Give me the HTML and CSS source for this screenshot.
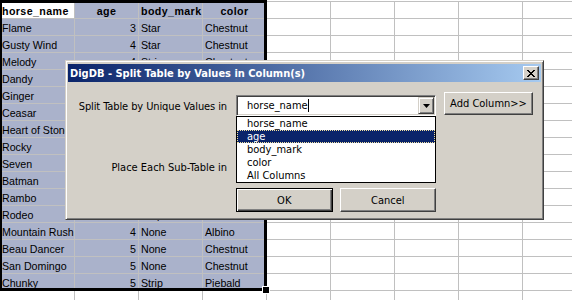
FILE: index.html
```html
<!DOCTYPE html>
<html lang="en">
<head>
  <meta charset="UTF-8">
  <title>DigDB - Split Table</title>
  <link rel="stylesheet" href="styles.css">
</head>
<body>
  <!-- Worksheet -->
  <div class="sheet" id="sheet"></div>
  <div class="selection"></div>
  <div class="fill-handle"></div>

  <!-- Dialog -->
  <div class="dialog">
    <div class="title-bar">
      <span>DigDB - Split Table by Values in Column(s)</span>
      <div class="close">
        <svg width="8" height="7" viewBox="0 0 8 7"><path d="M0 0h2v1h-2zM6 0h2v1h-2zM1 1h2v1h-2zM5 1h2v1h-2zM2 2h4v1h-4zM3 3h2v1h-2zM2 4h4v1h-4zM1 5h2v1h-2zM5 5h2v1h-2zM0 6h2v1h-2zM6 6h2v1h-2z" fill="#000"/></svg>
      </div>
    </div>

    <div class="form">
      <div class="label first">Split Table by Unique Values in</div>
      <div class="combo first">
        <span>horse_name</span><span class="caret"></span>
        <div class="combo-btn"><svg width="7" height="4" viewBox="0 0 7 4"><path d="M0 0h7l-3.5 4z" fill="#000"/></svg></div>
        <div class="list">
          <div class="item">horse_name</div>
          <div class="item active">age</div>
          <div class="item">body_mark</div>
          <div class="item">color</div>
          <div class="item">All Columns</div>
        </div>
      </div>
      <button class="btn add">Add Column&gt;&gt;</button>

      <div class="label second">Place Each Sub-Table in</div>
      <div class="combo second"></div>

      <div class="actions">
        <button class="btn default">OK</button>
        <button class="btn">Cancel</button>
      </div>
    </div>
  </div>

  <script>
    const sheet = document.getElementById('sheet');
    const horses = [
      ['Flame', 3, 'Star', 'Chestnut'],
      ['Gusty Wind', 4, 'Star', 'Chestnut'],
      ['Melody', 4, 'Strip', 'Chestnut'],
      ['Dandy', 3, 'Blaze', 'Bay'],
      ['Ginger', 2, 'Star', 'Chestnut'],
      ['Ceasar', 6, 'Blaze', 'Grey'],
      ['Heart of Stone', 5, 'None', 'Black'],
      ['Rocky', 4, 'Snip', 'Bay'],
      ['Seven', 7, 'Star', 'Dun'],
      ['Batman', 5, 'None', 'Black'],
      ['Rambo', 6, 'Blaze', 'Bay'],
      ['Rodeo', 3, 'Strip', 'Palomino'],
      ['Mountain Rush', 4, 'None', 'Albino'],
      ['Beau Dancer', 5, 'None', 'Chestnut'],
      ['San Domingo', 5, 'None', 'Chestnut'],
      ['Chunky', 5, 'Strip', 'Piebald']
    ];

    function addCell(text, classes) {
      const cell = document.createElement('div');
      cell.className = 'cell ' + classes;
      cell.textContent = text;
      sheet.appendChild(cell);
    }

    function addEmpty(count) {
      for (let i = 0; i < count; i++) addCell('', '');
    }

    // header row, A1 is the active cell
    addCell('horse_name', 'head');
    addCell('age', 'head center sel');
    addCell('body_mark', 'head sel');
    addCell('color', 'head center sel');
    addEmpty(5);

    horses.forEach(h => {
      addCell(h[0], 'sel');
      addCell(h[1], 'num sel');
      addCell(h[2], 'sel');
      addCell(h[3], 'sel');
      addEmpty(5);
    });

    addEmpty(9);
  </script>
</body>
</html>
```

FILE: styles.css
```css
body {
  margin: 0;
  padding-top: 1px;
  height: 299px;
  overflow: hidden;
  position: relative;
  background: #fff;
  font-family: "Liberation Sans", Arial, sans-serif;
}

/* Worksheet */
.sheet {
  display: grid;
  grid-template-columns: 75px repeat(8, 64px);
  grid-auto-rows: 17px;
  border-top: 1px solid #c0c0c0;
}

.cell {
  box-sizing: border-box;
  border-right: 1px solid #c0c0c0;
  border-bottom: 1px solid #c0c0c0;
  padding: 2px 2px 0;
  font-size: 10.67px;
  line-height: 14px;
  white-space: nowrap;
  overflow: hidden;
  color: #000;
}

.cell.head {
  font-weight: bold;
  letter-spacing: 0.4px;
}

.cell.center {
  text-align: center;
}

.cell.num {
  text-align: right;
}

.cell.sel {
  background: #aab2cb;
}

.selection {
  position: absolute;
  left: 0;
  top: 0;
  width: 267px;
  height: 291px;
  box-sizing: border-box;
  border: 3px solid #000;
  border-left-width: 2px;
}

.fill-handle {
  position: absolute;
  left: 262px;
  top: 286px;
  width: 6px;
  height: 6px;
  background: #000;
  border: 1px solid #fff;
}

/* Dialog */
.dialog {
  position: absolute;
  left: 65px;
  top: 60px;
  width: 479px;
  height: 160px;
  box-sizing: border-box;
  padding: 3px 2px 2px;
  background: #d4d0c8;
  border: 1px solid;
  border-color: #d4d0c8 #404040 #404040 #d4d0c8;
  box-shadow: inset 1px 1px #fff, inset -1px -1px #808080;
  font-family: "DejaVu Sans Condensed", "Liberation Sans", sans-serif;
  font-size: 11px;
  color: #000;
}

.title-bar {
  height: 18px;
  display: flex;
  align-items: center;
  justify-content: space-between;
  padding: 0 2px;
  background: linear-gradient(to right, #0a246a, #a6caf0);
  color: #fff;
  font-weight: bold;
}

.close {
  width: 16px;
  height: 14px;
  box-sizing: border-box;
  display: flex;
  align-items: center;
  justify-content: center;
  background: #d4d0c8;
  border: 1px solid;
  border-color: #fff #404040 #404040 #fff;
  box-shadow: inset -1px -1px #808080;
}

.form {
  display: grid;
  grid-template-columns: 159px 200px 89px;
  grid-template-rows: 24px 62px 34px;
  column-gap: 9px;
  padding-top: 10px;
}

.label {
  text-align: right;
  white-space: nowrap;
}

.label.first {
  align-self: center;
  padding-top: 5px;
  letter-spacing: -0.1px;
}

.label.second {
  align-self: end;
  line-height: 21px;
}

.combo {
  position: relative;
  height: 21px;
  box-sizing: border-box;
  display: flex;
  align-items: center;
  padding-left: 10px;
  background: #fff;
  border: 1px solid;
  border-color: #808080 #fff #fff #808080;
  box-shadow: inset 1px 1px #404040, inset -1px -1px #d4d0c8;
}

.combo.first {
  align-self: start;
  margin-top: 3px;
}

.combo.second {
  align-self: end;
}

.caret {
  width: 1px;
  height: 13px;
  background: #000;
}

.combo-btn {
  margin-left: auto;
  margin-right: 1px;
  width: 16px;
  height: 17px;
  box-sizing: border-box;
  display: flex;
  align-items: center;
  justify-content: center;
  background: #d4d0c8;
  border: 1px solid;
  border-color: #d4d0c8 #404040 #404040 #d4d0c8;
  box-shadow: inset 1px 1px #fff, inset -1px -1px #808080;
}

.list {
  position: absolute;
  top: calc(100% + 1px);
  left: -1px;
  width: 200px;
  box-sizing: border-box;
  border: 1px solid #000;
  background: #fff;
  z-index: 2;
}

.list .item {
  height: 13px;
  line-height: 13px;
  padding-left: 10px;
  overflow: hidden;
}

.list .item.active {
  background: #0a246a;
  color: #fff;
  outline: 1px dotted #f0e0a0;
  outline-offset: -1px;
}

.btn {
  font: inherit;
  color: #000;
  padding: 0;
  background: #d4d0c8;
  border: 1px solid;
  border-color: #fff #404040 #404040 #fff;
  box-shadow: inset -1px -1px #808080;
}

.btn.add {
  width: 89px;
  height: 23px;
  margin-left: -1px;
  align-self: start;
}

.btn.default {
  border-color: #000;
  box-shadow: inset 1px 1px #fff, inset -1px -1px #404040, inset -2px -2px #808080;
}

.actions {
  grid-column: 2;
  align-self: end;
  display: flex;
  gap: 7px;
}

.actions .btn {
  flex: 1;
  height: 24px;
}
```
